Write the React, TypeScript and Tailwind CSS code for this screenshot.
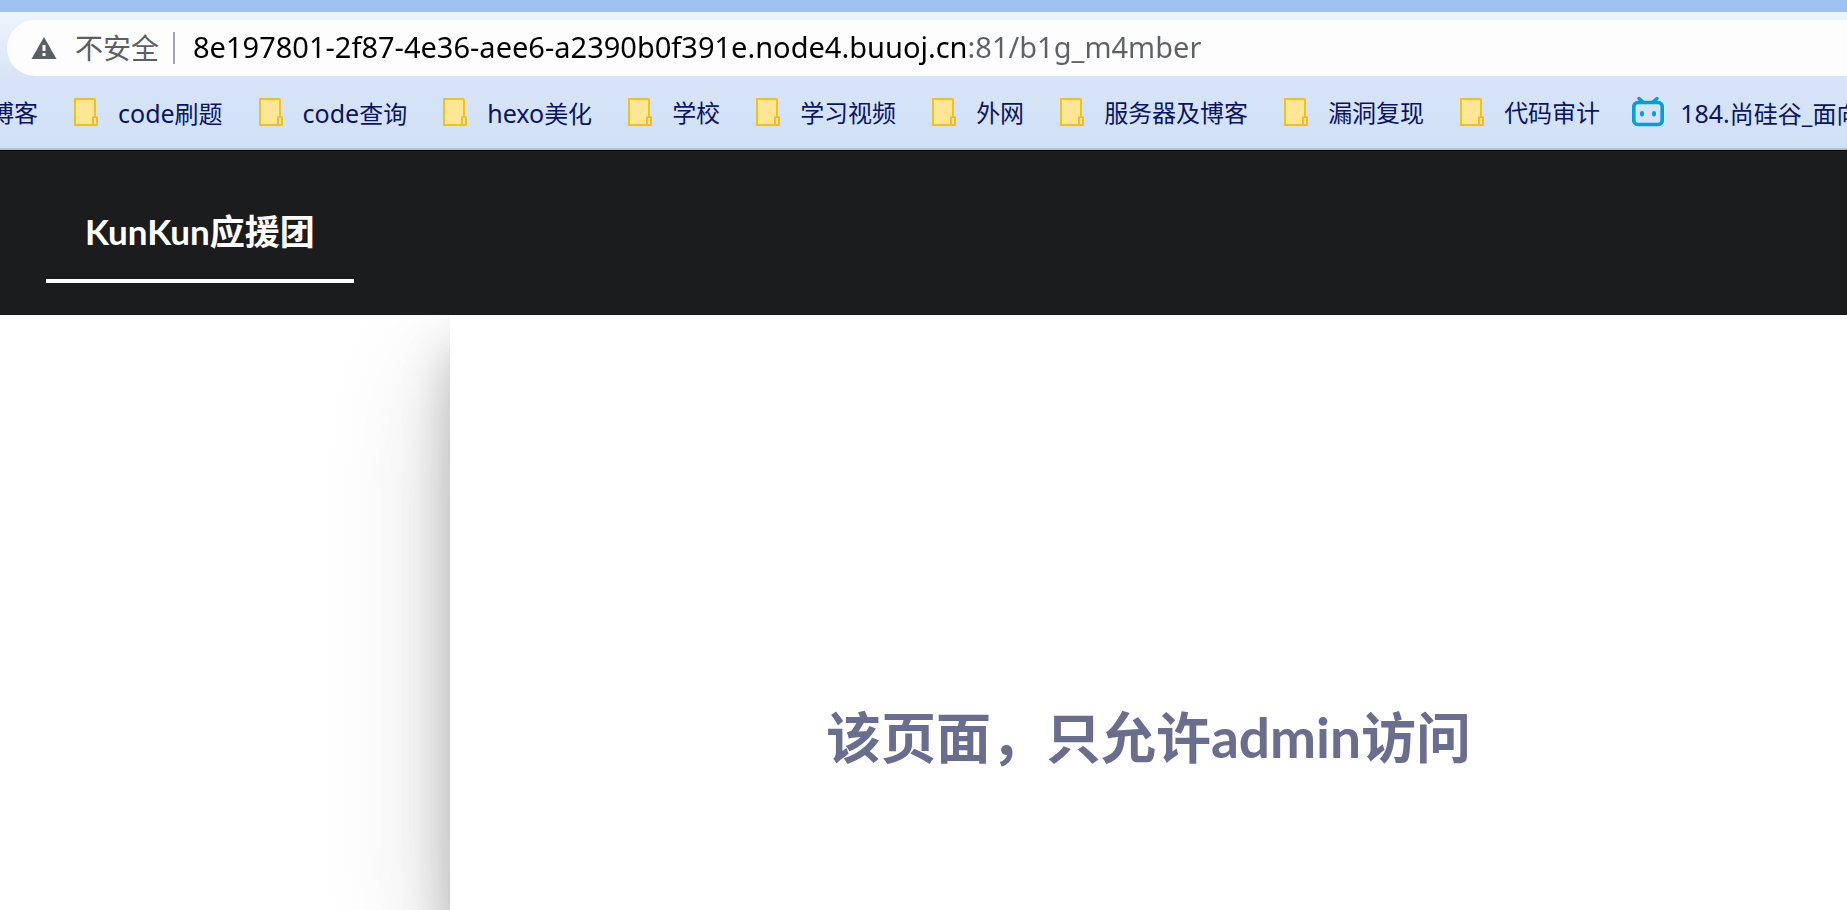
import React, { useState } from "react";

interface Bookmark {
  latin?: string;
  label: string;
  icon: "folder" | "bili" | "none";
}

const bookmarks: Bookmark[] = [
  { label: "博客", icon: "none" },
  { latin: "code", label: "刷题", icon: "folder" },
  { latin: "code", label: "查询", icon: "folder" },
  { latin: "hexo", label: "美化", icon: "folder" },
  { label: "学校", icon: "folder" },
  { label: "学习视频", icon: "folder" },
  { label: "外网", icon: "folder" },
  { label: "服务器及博客", icon: "folder" },
  { label: "漏洞复现", icon: "folder" },
  { label: "代码审计", icon: "folder" },
  { latin: "184.", label: "尚硅谷_面向", icon: "bili" },
];

function WarningIcon() {
  return (
    <svg width="26" height="22" viewBox="0 0 26 22" aria-hidden="true">
      <path d="M13 0L25.5 22H0.5Z" fill="#5b5f64" />
      <rect x="11.5" y="8" width="3" height="6" fill="#fdfdfe" />
      <rect x="11.5" y="16" width="3" height="3" fill="#fdfdfe" />
    </svg>
  );
}

function FolderIcon() {
  return (
    <svg width="32" height="32" viewBox="0 0 32 32" aria-hidden="true">
      <path
        d="M5 3H24Q25 3 25 4V20.500L27 22V28Q27 29 26 29H5Z"
        fill="#ffe694"
        stroke="#efc31a"
        strokeWidth="2"
      />
      <path
        d="M23 29V22Q23 21 24 21H26Q27 21 27 22V28Q27 29 26 29Z"
        fill="#ffe694"
        stroke="#e9c02c"
        strokeWidth="2"
      />
    </svg>
  );
}

function BiliIcon() {
  return (
    <svg
      width="32"
      height="32"
      viewBox="0 0 32 32"
      fill="none"
      stroke="#00a1d9"
      strokeLinecap="round"
      aria-hidden="true"
    >
      <path d="M7 2.500L11 6M25 2.500L21 6" strokeWidth="3.500" />
      <rect x="1.8" y="6.500" width="28.400" height="22" rx="4" strokeWidth="3.600" />
      <path d="M10 17V18.500M22 17V18.500" strokeWidth="4" />
    </svg>
  );
}

function AddressBar() {
  const [url, setUrl] = useState(
    "8e197801-2f87-4e36-aee6-a2390b0f391e.node4.buuoj.cn:81/b1g_m4mber"
  );

  return (
    <div className="ml-[7px] flex h-14 items-center rounded-l-full bg-[#fdfdfe] pl-6">
      <button className="flex items-center gap-[18px] text-[28px] leading-10 text-[#5b5f64]">
        <WarningIcon />
        不安全
      </button>
      <span className="ml-[14px] h-8 w-0.5 bg-[#a3a6aa]" />
      {/* host is black, port and path are grey */}
      <input
        aria-label="Address"
        className="ml-[18px] h-12 min-w-0 flex-1 bg-linear-to-r from-black from-[773px] to-[#5f6265] to-[773px] bg-clip-text pb-[3px] text-[29px] text-transparent caret-black outline-none"
        value={url}
        onChange={(e) => setUrl(e.target.value)}
      />
    </div>
  );
}

function BookmarkBar() {
  return (
    <nav className="flex h-[72px] gap-8 overflow-hidden pt-5">
      {bookmarks.map((b, i) => (
        <a
          key={i}
          href="#"
          className="flex h-8 shrink-0 items-center gap-4 whitespace-nowrap text-2xl leading-8 text-[#0a1464] first:-ml-[10px]"
        >
          {b.icon === "folder" && <FolderIcon />}
          {b.icon === "bili" && <BiliIcon />}
          <span className="pt-0.5">
            {b.latin && <span className="text-[25px]">{b.latin}</span>}
            {b.label}
          </span>
        </a>
      ))}
    </nav>
  );
}

export default function App() {
  return (
    <div className="flex min-h-screen flex-col overflow-hidden bg-white font-['Noto_Sans','Noto_Sans_CJK_SC',sans-serif]">
      <div className="h-3 bg-[#9ec3f2]" />
      <div className="border-b-2 border-[#b1c0d6] bg-linear-to-b from-[#edf4fd] via-[#d7e4f6] via-50% to-[#d1e1f7] pt-2">
        <AddressBar />
        <BookmarkBar />
      </div>

      <header className="relative z-10 border-t border-black bg-[#1b1c1d] px-[46px] py-8 font-['Lato','Noto_Sans_CJK_SC',sans-serif]">
        <a
          href="#"
          className="inline-flex h-[100px] items-center border-b-4 border-white px-[39px] align-top text-[35px] font-bold text-white"
        >
          KunKun应援团
        </a>
      </header>

      <main className="ml-[450px] flex flex-1 justify-center bg-white pt-[382px] font-['Lato','Noto_Sans_CJK_SC',sans-serif] shadow-[0_36px_44px_rgba(0,0,0,0.22),0_56px_112px_rgba(0,0,0,0.19)]">
        <h1 className="text-[55px] leading-[80px] font-bold text-[#696e8e]">
          该页面，只允许admin访问
        </h1>
      </main>
    </div>
  );
}
